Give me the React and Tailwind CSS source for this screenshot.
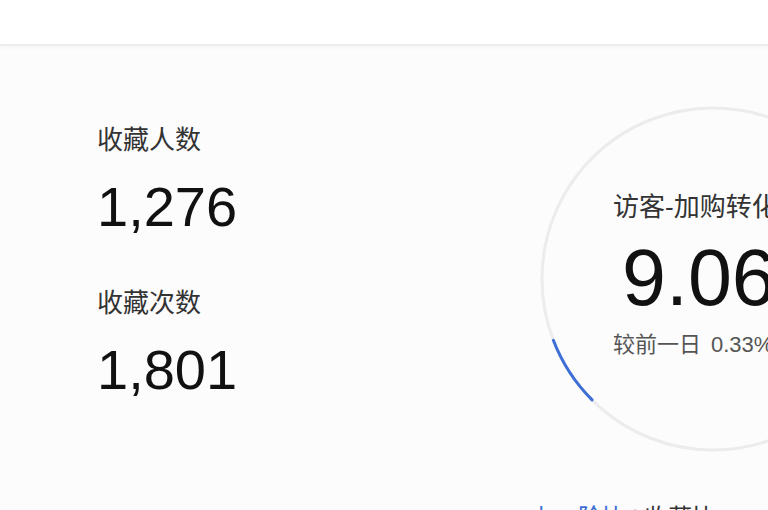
import React from 'react';

const font = { fontFamily: '"Liberation Sans", "Noto Sans CJK SC", sans-serif' };

const Stat = ({ label, value }) => (
  <div className="flex flex-col">
    <div className="text-[26px] leading-[36px] text-[#333]">{label}</div>
    <div className="text-[56px] leading-[64px] text-[#111] mt-[17px]">{value}</div>
  </div>
);

const Ring = () => {
  // ring centre (174,174), radius 171, blue arc from 135deg to 159deg
  const r = 171;
  const c = 174;
  const pt = (deg) => {
    const a = (deg * Math.PI) / 180;
    return `${(c + r * Math.cos(a)).toFixed(2)} ${(c + r * Math.sin(a)).toFixed(2)}`;
  };
  return (
    <svg className="absolute left-[-3px] top-[-3px]" width="348" height="348" viewBox="0 0 348 348">
      <circle cx={c} cy={c} r={r} fill="none" stroke="#ececec" strokeWidth="3" />
      <path d={`M ${pt(135)} A ${r} ${r} 0 0 1 ${pt(159)}`} fill="none" stroke="#3d6fd6" strokeWidth="3" strokeLinecap="round" />
    </svg>
  );
};

const App = () => {
  return (
    <div className="w-[768px] h-[510px] overflow-hidden bg-[#fcfcfc]" style={font}>
      {/* Header strip */}
      <header className="h-[46px] bg-white border-b-2 border-[#ededed] shadow-[0_2px_4px_rgba(0,0,0,0.03)]" />

      <div className="flex">
        {/* Left stats */}
        <div className="ml-[97px] mt-[76px] flex flex-col gap-[46px] w-[445px] shrink-0">
          <Stat label="收藏人数" value="1,276" />
          <Stat label="收藏次数" value="1,801" />
        </div>

        {/* Conversion ring */}
        <div className="flex flex-col shrink-0">
          <div className="relative mt-[62px] w-[342px] h-[342px] shrink-0 flex flex-col pt-[82px] pl-[71px]">
            <Ring />
            <div className="relative flex flex-col">
              <div className="text-[26px] leading-[34px] text-[#333] whitespace-nowrap">访客-加购转化率</div>
              <div className="text-[79px] leading-[86px] text-[#111] mt-[11px] ml-[9px] whitespace-nowrap">9.06%</div>
              <div className="text-[22px] leading-[30px] text-[#555] whitespace-nowrap mt-[9px]">
                较前一日<span className="ml-[10px]">0.33%</span>
              </div>
            </div>
          </div>
          <div className="mt-[53px] ml-[-12px] text-[24px] leading-[30px] whitespace-nowrap">
            <span className="text-[#3d6fd6]">上一阶比</span>
            <span className="text-[#ccc] mx-[6px]">|</span>
            <span className="text-[#333]">收藏比</span>
          </div>
        </div>
      </div>
    </div>
  );
};

export default App;
